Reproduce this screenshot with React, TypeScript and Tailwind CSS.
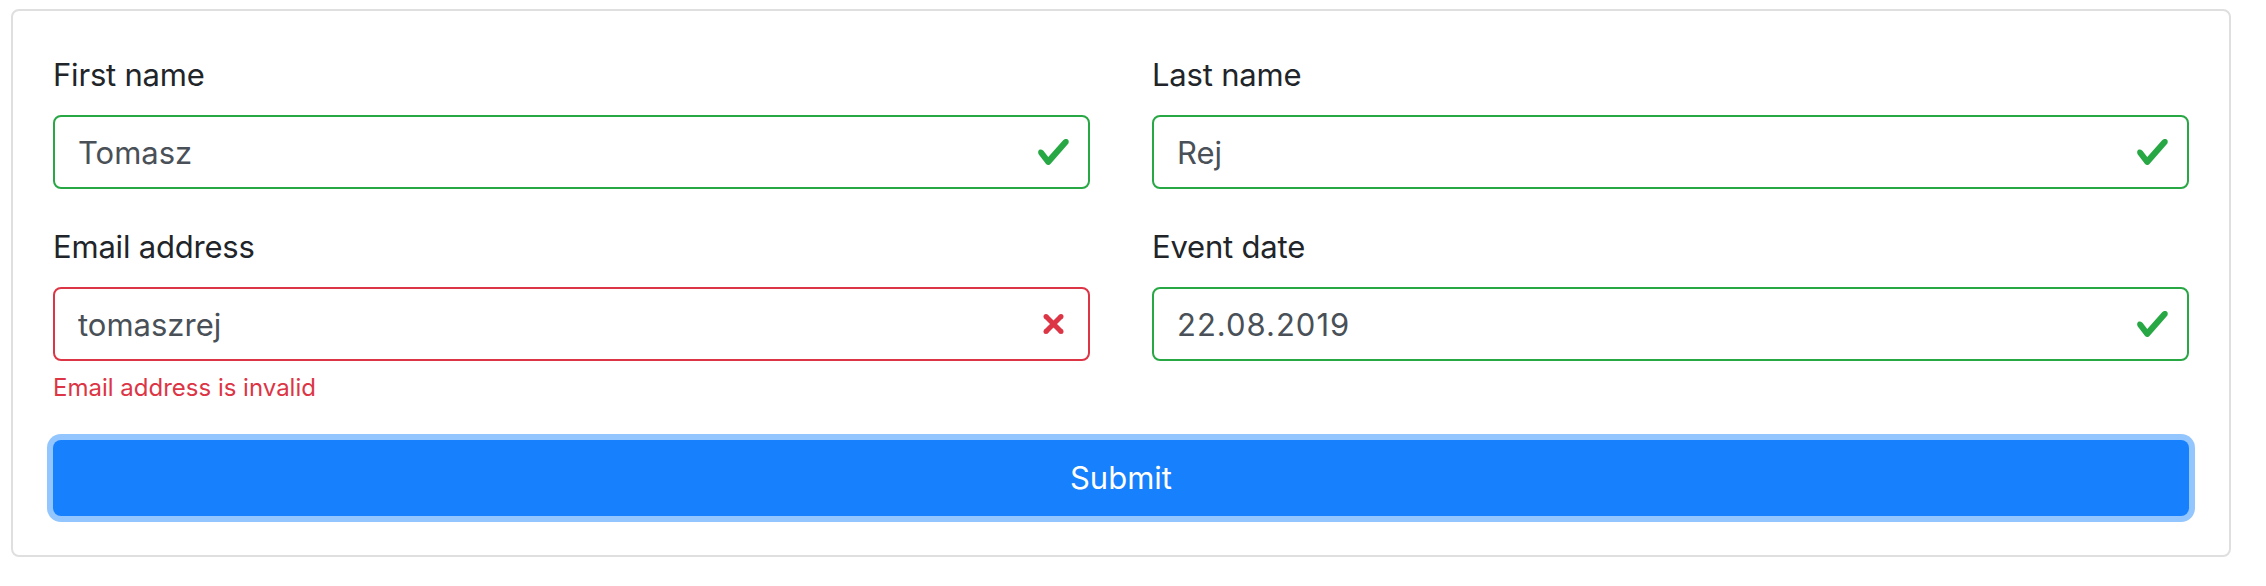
type Field = {
  label: string;
  value: string;
  valid: boolean;
  error?: string;
  wide?: boolean;
};

function ValidIcon() {
  return (
    <svg viewBox="0 0 8 8" className="h-[35px] w-[35px]">
      <path
        fill="#28a745"
        d="M2.3 6.73L.6 4.53c-.4-1.04.46-1.4 1.1-.8l1.1 1.4 3.4-3.8c.6-.63 1.6-.27 1.2.7l-4 4.6c-.43.5-.8.4-1.1.1z"
      />
    </svg>
  );
}

function InvalidIcon() {
  return (
    <svg viewBox="-2 -2 7 7" className="h-[35px] w-[35px]" fill="#dc3545">
      <path stroke="#dc3545" d="M0 0l3 3m0-3L0 3" />
      <circle r=".5" />
      <circle cx="3" r=".5" />
      <circle cy="3" r=".5" />
      <circle cx="3" cy="3" r=".5" />
    </svg>
  );
}

function FormField({ field }: { field: Field }) {
  return (
    <div className="flex flex-col">
      <label className="mb-[17px] text-[31px] leading-[47px] tracking-[-0.2px] text-[#212529]">
        {field.label}
      </label>
      <div className="relative">
        <input
          readOnly
          value={field.value}
          className={
            field.valid
              ? "h-[74px] w-full rounded-[8px] border-2 border-[#28a745] bg-white pl-[23px] pr-[70px] text-[31px] leading-[47px] text-[#495057] outline-none"
              : "h-[74px] w-full rounded-[8px] border-2 border-[#dc3545] bg-white pl-[23px] pr-[70px] text-[31px] leading-[47px] text-[#495057] outline-none"
          }
          style={field.wide ? { letterSpacing: "1px" } : undefined}
        />
        <div className="pointer-events-none absolute right-[19px] top-1/2 -translate-y-1/2">
          {field.valid ? <ValidIcon /> : <InvalidIcon />}
        </div>
      </div>
      {field.error && (
        <div className="mt-[9px] text-[24px] leading-[36px] text-[#dc3545]">
          {field.error}
        </div>
      )}
    </div>
  );
}

export default function App() {
  const fields: Field[] = [
    { label: "First name", value: "Tomasz", valid: true },
    { label: "Last name", value: "Rej", valid: true },
    {
      label: "Email address",
      value: "tomaszrej",
      valid: false,
      error: "Email address is invalid",
    },
    { label: "Event date", value: "22.08.2019", valid: true, wide: true },
  ];

  return (
    <div className="h-[586px] w-[2266px] bg-white pl-[11px] pt-[9px] font-['Inter',sans-serif]">
      <div className="w-[2220px] rounded-[8px] border-2 border-[#dfdfdf] px-[40px] pb-[39px] pt-[40px]">
        <div className="grid grid-cols-2 gap-x-[62px] gap-y-[34px]">
          {fields.map((field) => (
            <FormField key={field.label} field={field} />
          ))}
        </div>
        <button
          type="button"
          className="mt-[34px] h-[76px] w-full rounded-[8px] bg-[#1780fc] text-[31px] text-white shadow-[0_0_0_6px_#93c6fe]"
        >
          Submit
        </button>
      </div>
    </div>
  );
}
